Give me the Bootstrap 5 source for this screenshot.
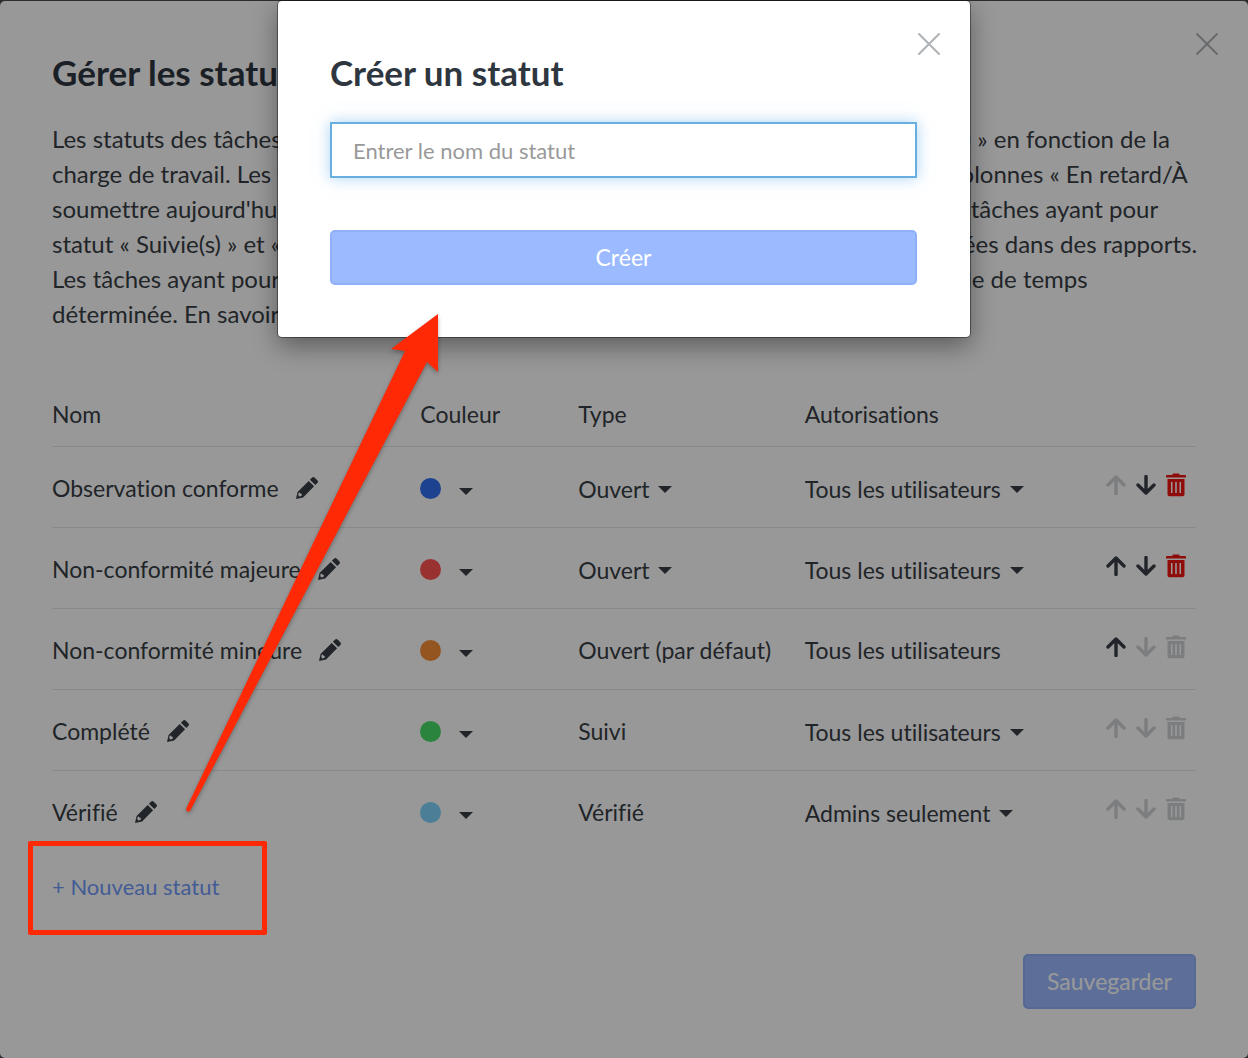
<!DOCTYPE html>
<html lang="fr">
<head>
<meta charset="utf-8">
<meta name="viewport" content="width=device-width, initial-scale=1">
<title>Gérer les statuts</title>
<link href="https://cdn.jsdelivr.net/npm/bootstrap@5.3.0/dist/css/bootstrap.min.css" rel="stylesheet">
<style>
body { font-family: Lato, "Liberation Sans", sans-serif; font-size: 23px; line-height: 35px; color: #373d43; background: #4c4c4f; font-variant-ligatures: none; }
h1, h2 { font-size: 35px; line-height: 42px; font-weight: 700; color: #2e3640; margin: 0; }
.page-panel { margin-top: 1px; padding: 50px 52px 48px; background: #fefeff; border-radius: 5px; min-height: calc(100vh - 1px); }
.close-btn { position: absolute; top: 31px; right: 29px; width: 24px; height: 24px; padding: 0; border: 0; background: none; color: #aeb2b6; line-height: 0; }
.intro-text { font-size: 24px; margin: 28px 0 65px; }
.status-table { table-layout: fixed; color: inherit; margin: 0; --bs-table-bg: transparent; --bs-table-color: #373d43; }
.status-table > :not(caption) > * > * { padding: 3px 0 0; border-color: #e2e4e6; height: 81px; font-weight: 400; }
.status-table > thead > tr > * { height: 50px; padding: 0 0 14px; }
.status-table > tbody > tr:last-child > * { border-bottom: 0; }
.c-name { width: 32.2%; } .c-color { width: 13.8%; } .c-type { width: 19.8%; } .c-perm { width: 26.2%; }
.plain-btn { padding: 0; border: 0; background: none; color: inherit; line-height: 0; }
.plain-btn svg { display: block; }
.plain-btn:disabled { color: #cfd1d3; }
.del-btn { color: #f01412; }
.row-actions { display: flex; align-items: center; justify-content: flex-end; gap: 10px; padding: 0 10px 6px 0; }
.plain-select { appearance: none; border: 0; padding: 0; background: none; color: inherit; font: inherit; line-height: 35px; outline: 0; }
.pick { display: inline-flex; align-items: center; gap: 8px; padding-top: 2px; }
.tri { width: 0; height: 0; border: 7px solid transparent; border-top-color: currentColor; border-bottom: 0; }
.color-pick { display: flex; align-items: center; gap: 18px; }
.color-pick .tri { margin-top: 6px; }
.dot { width: 21px; height: 21px; border-radius: 50%; }
.new-status { margin-top: 18px; font-size: 22px; }
.new-link { color: #7099f8; text-decoration: none; }
.callout { position: absolute; inset: -28px -48px -31px -24px; border: 5px solid #ff2a05; border-radius: 2px; z-index: 20; pointer-events: none; }
.save-bar { margin-top: 50px; }
.main-btn { height: 55px; padding: 0 22px; font-size: 23px; line-height: 1; border-radius: 5px; color: #fff; background: #9bbaff; border: 2px solid #8fb0f8; }
.main-btn:hover { background: #8aacf8; color: #fff; }
.dim-layer { position: absolute; inset: 0; background: rgba(0,0,0,.4); z-index: 10; }
.front-dialog { position: absolute; top: 1px; left: 0; right: 0; margin: 0 auto; max-width: 692px; z-index: 15; }
.front-dialog .modal-content { border: 0; border-radius: 4px; padding: 50px 53px 52px 52px; background: #fff; box-shadow: 0 0 0 1px rgba(0,0,0,.4), 0 9px 26px rgba(0,0,0,.4); }
.name-input, .name-input:focus { height: 56px; padding: 0 21px; font-size: 22px; border: 2px solid #69aee0; border-radius: 0; box-shadow: 0 0 14px rgba(102,175,233,.55); margin: 29px 0 52px; }
.name-input::placeholder { color: #999; }
.arrow-layer { position: absolute; left: 0; top: 0; z-index: 20; pointer-events: none; filter: drop-shadow(0 2px 2px rgba(0,0,0,.3)); }
</style>
<script src="https://cdn.jsdelivr.net/npm/bootstrap@5.3.0/dist/js/bootstrap.bundle.min.js"></script>
</head>
<body>
<svg class="d-none" aria-hidden="true">
  <symbol id="pencil" viewBox="0 0 24 24"><path fill="currentColor" d="M1 23l1.600-7.100L13.700 4.900l5.400 5.400L8.100 21.400zM14.900 3.700l2-2c.9-.9 2-.9 2.900 0l2.500 2.500c.9.9.9 2 0 2.900l-2 2z"/><path fill="#fefeff" d="M3.200 18.200l.9-2 1.400 1.300 1.300.4.200 1.300-1.900 1.300-1.300-.3z"/></symbol>
  <symbol id="arr" viewBox="0 0 20 20"><path d="M10 18.500V2.500M2 10l8-8 8 8" fill="none" stroke="currentColor" stroke-width="3.400" stroke-linecap="round" stroke-linejoin="round"/></symbol>
  <symbol id="bin" viewBox="0 0 20 24"><path fill="currentColor" fill-rule="evenodd" d="M0 2.500Q0 2 .6 2H6L7.200.6h5.600L14 2h5.400q.6 0 .6.500V4.500H0zM1.500 6h17v15.500q0 1.800-1.800 1.800H3.300q-1.800 0-1.800-1.800zM5 9v11h1.500V9zM9.200 9v11h1.600V9zM13.500 9v11H15V9z"/></symbol>
  <symbol id="cross" viewBox="0 0 24 24"><path d="M2 2l20 20M22 2L2 22" stroke="currentColor" stroke-width="2" stroke-linecap="round"/></symbol>
</svg>
<div class="position-relative overflow-hidden">
  <main class="page-panel position-relative">
    <button class="close-btn" type="button" aria-label="Fermer la page"><svg width="24" height="24"><use href="#cross"/></svg></button>
    <h1>Gérer les statuts</h1>
    <p class="intro-text text-nowrap">Les statuts des tâches permettent d'organiser la liste des tâches avec le statut « Suivie(s) » en fonction de la<br>
      charge de travail. Les tâches qui ont le statut « Ouvert » apparaissent ensuite dans les colonnes « En retard/À<br>
      soumettre aujourd'hui/ Demain/À venir » de votre tableau de bord. Seules les nouvelles tâches ayant pour<br>
      statut « Suivie(s) » et « Complétée(s) » sont terminées, elles peuvent encore être consultées dans des rapports.<br>
      Les tâches ayant pour statut « Vérifiée(s) » sont supprimées à la fin d'une certaine période de temps<br>
      déterminée. En savoir plus</p>
    <table class="table status-table align-middle">
      <thead><tr><th class="c-name" scope="col">Nom</th><th class="c-color" scope="col">Couleur</th><th class="c-type" scope="col">Type</th><th class="c-perm" scope="col">Autorisations</th><th aria-label="Actions"></th></tr></thead>
      <tbody id="rows"></tbody>
    </table>
    <div class="new-status d-inline-block position-relative">
      <a class="new-link" href="#">+ Nouveau statut</a>
      <div class="callout"></div>
    </div>
    <div class="save-bar d-flex justify-content-end">
      <button class="btn main-btn" type="button">Sauvegarder</button>
    </div>
  </main>
  <div class="dim-layer"></div>
  <div class="front-dialog" role="dialog" aria-labelledby="dlgTitle">
    <form class="modal-content">
      <button class="close-btn" type="button" aria-label="Fermer"><svg width="24" height="24"><use href="#cross"/></svg></button>
      <h2 id="dlgTitle">Créer un statut</h2>
      <input class="form-control name-input" type="text" placeholder="Entrer le nom du statut" aria-label="Nom du statut">
      <button class="btn main-btn w-100" type="button">Créer</button>
    </form>
  </div>
  <svg class="arrow-layer" width="500" height="830" viewBox="0 0 500 830" aria-hidden="true"><path fill="#ff2a05" d="M438 314L391 349 405 351 186 809Q187 813 190 811L427 362 438 372z"/></svg>
</div>
<script>
const statuses = [
  ['Observation conforme', '#2f6ff0', 'Ouvert', true, 'Tous les utilisateurs', true, 0, 1, 1],
  ['Non-conformité majeure', '#ff5353', 'Ouvert', true, 'Tous les utilisateurs', true, 1, 1, 1],
  ['Non-conformité mineure', '#f98e38', 'Ouvert (par défaut)', false, 'Tous les utilisateurs', false, 1, 0, 0],
  ['Complété', '#48dc68', 'Suivi', false, 'Tous les utilisateurs', true, 0, 0, 0],
  ['Vérifié', '#7fd2fc', 'Vérifié', false, 'Admins seulement', true, 0, 0, 0]
];
const choice = (text, label, editable) => editable
  ? `<span class="pick"><select class="plain-select" aria-label="${label}"><option>${text}</option></select><i class="tri"></i></span>` : text;
const action = (icon, label, on, cls, w, h, flip) =>
  `<button type="button" class="plain-btn ${cls}" aria-label="${label}" ${on ? '' : 'disabled'}><svg width="${w}" height="${h}"><use href="#${icon}" ${flip ? 'transform="rotate(180 10 10)"' : ''}/></svg></button>`;
document.getElementById('rows').innerHTML = statuses.map(([name, color, type, te, perm, pe, up, down, del]) => `
<tr><td><div class="d-flex align-items-center"><span>${name}</span><button type="button" class="plain-btn ms-3" aria-label="Modifier ${name}"><svg width="24" height="24"><use href="#pencil"/></svg></button></div></td>
<td><button type="button" class="plain-btn color-pick" aria-label="Couleur de ${name}"><span class="dot" style="background:${color}"></span><i class="tri"></i></button></td>
<td>${choice(type, 'Type', te)}</td><td>${choice(perm, 'Autorisations', pe)}</td>
<td><div class="row-actions">${action('arr', 'Monter', up, '', 20, 20)}${action('arr', 'Descendre', down, '', 20, 20, true)}${action('bin', 'Supprimer', del, 'del-btn', 20, 24)}</div></td></tr>`).join('');
</script>
</body>
</html>
